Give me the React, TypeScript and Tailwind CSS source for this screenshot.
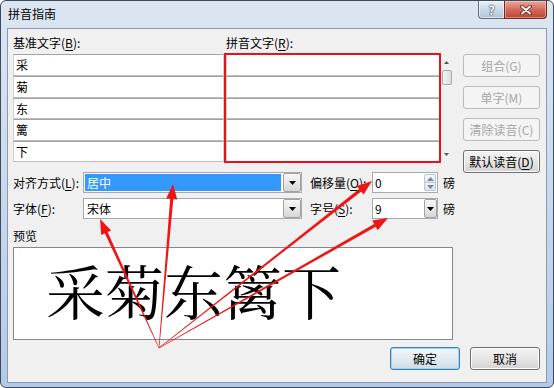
import React from "react";

function U({ c }: { c: string }) {
  return <span className="underline underline-offset-[2px]">{c}</span>;
}

function Lbl({ t, k }: { t: string; k: string }) {
  return (
    <>
      {t}(<U c={k} />):
    </>
  );
}

function DownTri({ color = "#000" }: { color?: string }) {
  return (
    <svg width="7" height="4" viewBox="0 0 7 4">
      <polygon points="0,0 7,0 3.5,4" fill={color} />
    </svg>
  );
}

function UpTri({ color = "#000" }: { color?: string }) {
  return (
    <svg width="7" height="4" viewBox="0 0 7 4">
      <polygon points="0,4 7,4 3.5,0" fill={color} />
    </svg>
  );
}

function DropBtn({ w }: { w: string }) {
  return (
    <div
      className={`${w} h-full shrink-0 flex items-center justify-center border border-[#a3a3a3] rounded-[2px] bg-linear-to-b from-[#f6f6f6] via-[#e8e8e8] to-[#d6d6d6]`}
    >
      <DownTri />
    </div>
  );
}

function Cell({ h, t }: { h: string; t?: string }) {
  return (
    <div
      className={`${h} shrink-0 flex items-center pl-[2px] bg-white border border-x-[#cfcfcf] border-t-[#a3a3a3] border-b-[#bdbdbd]`}
    >
      {t}
    </div>
  );
}

function SideBtn({ children, disabled }: { children: React.ReactNode; disabled?: boolean }) {
  return disabled ? (
    <div className="h-[23px] flex items-center justify-center rounded-[3px] border border-[#b9bcbf] bg-[#f4f4f4] text-[#a6a6a6]">
      {children}
    </div>
  ) : (
    <div className="h-[23px] flex items-center justify-center rounded-[3px] border border-[#707070] bg-linear-to-b from-[#f3f3f3] via-[#e6e6e6] to-[#d3d3d3] shadow-[inset_0_0_0_1px_#fbfbfb]">
      {children}
    </div>
  );
}

const O: [number, number] = [159, 348];
const TIPS: [number, number][] = [
  [100, 219],
  [173, 184],
  [372, 181],
  [388, 218],
];

function arrowPolys(tx: number, ty: number) {
  const dx = tx - O[0];
  const dy = ty - O[1];
  const len = Math.hypot(dx, dy);
  const ux = dx / len;
  const uy = dy / len;
  const nx = -uy;
  const ny = ux;
  const L = 15;
  const W = 5.5;
  const bx = tx - ux * L;
  const by = ty - uy * L;
  const p = (a: number, b: number) => `${a.toFixed(1)},${b.toFixed(1)}`;
  const shaft = [
    p(O[0] + nx * 0.3, O[1] + ny * 0.3),
    p(bx + ux * 3 + nx * 1.6, by + uy * 3 + ny * 1.6),
    p(bx + ux * 3 - nx * 1.6, by + uy * 3 - ny * 1.6),
    p(O[0] - nx * 0.3, O[1] - ny * 0.3),
  ].join(" ");
  const head = [p(tx, ty), p(bx + nx * W, by + ny * W), p(bx - nx * W, by - ny * W)].join(" ");
  return { shaft, head };
}

export default function App() {
  return (
    <div className="relative w-[554px] h-[388px] bg-white overflow-hidden font-['Noto_Sans_CJK_SC','Noto_Sans',sans-serif] text-[12px] leading-[16px] text-black">
      <div className="flex flex-col w-full h-full rounded-[6px] border border-[#3d4b5e] bg-linear-to-b from-[#dce6f2] via-[#c8d9ed] to-[#b2cae8]">
        {/* title bar */}
        <div className="flex h-[27px] shrink-0 justify-between">
          <div className="pl-[7px] pt-[5px]">拼音指南</div>
          <div className="flex pr-[6px] h-[18px]">
            <div className="w-[26px] h-full flex items-center justify-center rounded-bl-[4px] border border-t-0 border-r-0 border-[#5f6e83] bg-linear-to-b from-[#e9f0f8] via-[#cbd8e8] to-[#b3c4d9] shadow-[inset_0_0_0_1px_rgba(255,255,255,0.5)]">
              <span className="font-bold text-[12px] text-white [text-shadow:0_0_2px_#1e2c3e,0_0_1px_#1e2c3e]">?</span>
            </div>
            <div className="w-[43px] h-full flex items-center justify-center rounded-br-[4px] border border-t-0 border-[#6e2a22] bg-linear-to-b from-[#eaa99c] via-[#d26a58] to-[#c0442f] shadow-[inset_0_0_0_1px_rgba(255,220,210,0.45)]">
              <svg width="12" height="10" viewBox="0 0 12 10">
                <path d="M2 1.5 L10 8.5 M10 1.5 L2 8.5" stroke="#5a1a12" strokeWidth="3.6" strokeLinecap="round" />
                <path d="M2 1.5 L10 8.5 M10 1.5 L2 8.5" stroke="#ffffff" strokeWidth="2" strokeLinecap="round" />
              </svg>
            </div>
          </div>
        </div>

        {/* client area */}
        <div className="mx-[6px] h-[355px] shrink-0 border border-[#8a9bb1] bg-[#f0f0f0] flex flex-col pl-[5px] pr-[6px]">
          <div className="flex gap-[10px]">
            {/* left column */}
            <div className="w-[440px] shrink-0 flex flex-col">
              <div className="h-[25px] flex pt-[6px]">
                <div className="w-[213px] shrink-0">
                  <Lbl t="基准文字" k="B" />
                </div>
                <div>
                  <Lbl t="拼音文字" k="R" />
                </div>
              </div>

              <div className="h-[108px] flex">
                <div className="w-[211px] shrink-0 flex flex-col">
                  <Cell h="h-[22px]" t="采" />
                  <Cell h="h-[22px]" t="菊" />
                  <Cell h="h-[21px]" t="东" />
                  <Cell h="h-[22px]" t="篱" />
                  <Cell h="h-[21px]" t="下" />
                </div>
                <div className="w-[2px] shrink-0" />
                <div className="w-[214px] shrink-0 flex flex-col">
                  <Cell h="h-[22px]" />
                  <Cell h="h-[22px]" />
                  <Cell h="h-[21px]" />
                  <Cell h="h-[22px]" />
                  <Cell h="h-[21px]" />
                </div>
                {/* scrollbar */}
                <div className="w-[13px] shrink-0 flex flex-col items-end pr-[1px]">
                  <div className="h-[16px] w-[11px] flex items-center justify-center">
                    <svg width="5" height="3" viewBox="0 0 5 3">
                      <polygon points="0,3 5,3 2.5,0" fill="#555" />
                    </svg>
                  </div>
                  <div className="h-[15px] w-[10px] rounded-[2px] border border-[#a9a9a9] bg-linear-to-r from-[#f3f3f3] to-[#dddddd]" />
                  <div className="flex-1" />
                  <div className="h-[16px] w-[11px] flex items-center justify-center">
                    <svg width="5" height="3" viewBox="0 0 5 3">
                      <polygon points="0,0 5,0 2.5,3" fill="#555" />
                    </svg>
                  </div>
                </div>
              </div>

              {/* row 1 */}
              <div className="mt-[10px] h-[21px] flex items-center">
                <div className="w-[70px] shrink-0">
                  <Lbl t="对齐方式" k="L" />
                </div>
                <div className="w-[219px] h-full shrink-0 flex border border-[#a7a9ae] bg-white">
                  <div className="flex-1 p-[1px] pr-[2px]">
                    <div className="h-full bg-[#3399ff] text-white flex items-center pl-[2px]">居中</div>
                  </div>
                  <DropBtn w="w-[18px]" />
                </div>
                <div className="ml-[8px] w-[62px] shrink-0">
                  <Lbl t="偏移量" k="O" />
                </div>
                <div className="w-[66px] h-full shrink-0 flex border border-[#a7a9ae] bg-white">
                  <div className="flex-1 flex items-center pl-[2px]">0</div>
                  <div className="w-[13px] shrink-0 flex flex-col py-[1px] pr-[1px]">
                    <div className="flex-1 flex items-center justify-center border border-[#b7c5d6] rounded-t-[2px] bg-linear-to-b from-[#f6f9fc] to-[#e3eaf2]">
                      <UpTri color="#7a8595" />
                    </div>
                    <div className="flex-1 flex items-center justify-center border border-t-0 border-[#b7c5d6] rounded-b-[2px] bg-linear-to-b from-[#eef3f8] to-[#dde5ee]">
                      <DownTri color="#7a8595" />
                    </div>
                  </div>
                </div>
                <div className="ml-[5px] shrink-0">磅</div>
              </div>

              {/* row 2 */}
              <div className="mt-[5px] h-[21px] flex items-center">
                <div className="w-[70px] shrink-0">
                  <Lbl t="字体" k="F" />
                </div>
                <div className="w-[219px] h-full shrink-0 flex border border-[#a7a9ae] bg-white">
                  <div className="flex-1 flex items-center pl-[3px]">宋体</div>
                  <DropBtn w="w-[18px]" />
                </div>
                <div className="ml-[8px] w-[62px] shrink-0">
                  <Lbl t="字号" k="S" />
                </div>
                <div className="w-[66px] h-full shrink-0 flex border border-[#a7a9ae] bg-white">
                  <div className="flex-1 flex items-center pl-[2px]">9</div>
                  <DropBtn w="w-[13px]" />
                </div>
                <div className="ml-[5px] shrink-0">磅</div>
              </div>

              <div className="mt-[9px] h-[16px]">预览</div>

              <div className="mt-[3px] h-[93px] border border-[#828790] bg-white flex items-center pl-[32px] pb-[7px]">
                <span className="font-['Noto_Serif_CJK_SC','Noto_Sans_CJK_SC',serif] text-[59px] leading-[66px] tracking-[0px]">
                  采菊东篱下
                </span>
              </div>
            </div>

            {/* right buttons */}
            <div className="w-[77px] shrink-0 flex flex-col gap-[9px] pt-[25px]">
              <SideBtn disabled>
                组合(G)
              </SideBtn>
              <SideBtn disabled>
                单字(M)
              </SideBtn>
              <SideBtn disabled>
                清除读音(C)
              </SideBtn>
              <SideBtn>
                默认读音(<U c="D" />)
              </SideBtn>
            </div>
          </div>

          {/* bottom buttons */}
          <div className="mt-[7px] h-[23px] flex justify-end gap-[10px]">
            <div className="w-[70px] h-full flex items-center justify-center rounded-[3px] border border-[#3c7fb1] bg-linear-to-b from-[#f2f6f9] via-[#e3ebf1] to-[#cfdce6] shadow-[inset_0_0_0_1px_#98d3f3]">
              确定
            </div>
            <div className="w-[70px] h-full flex items-center justify-center rounded-[3px] border border-[#707070] bg-linear-to-b from-[#f3f3f3] via-[#e6e6e6] to-[#d3d3d3] shadow-[inset_0_0_0_1px_#fbfbfb]">
              取消
            </div>
          </div>
        </div>
      </div>

      {/* annotations */}
      <div className="absolute left-[224px] top-[53px] w-[217px] h-[110px] border-2 border-[#e8121c] pointer-events-none" />
      <svg className="absolute left-0 top-0 pointer-events-none" width="554" height="388" viewBox="0 0 554 388">
        {TIPS.map(([x, y], i) => {
          const { shaft, head } = arrowPolys(x, y);
          return (
            <g key={i} fill="#f01414">
              <polygon points={shaft} />
              <polygon points={head} />
            </g>
          );
        })}
      </svg>
    </div>
  );
}
